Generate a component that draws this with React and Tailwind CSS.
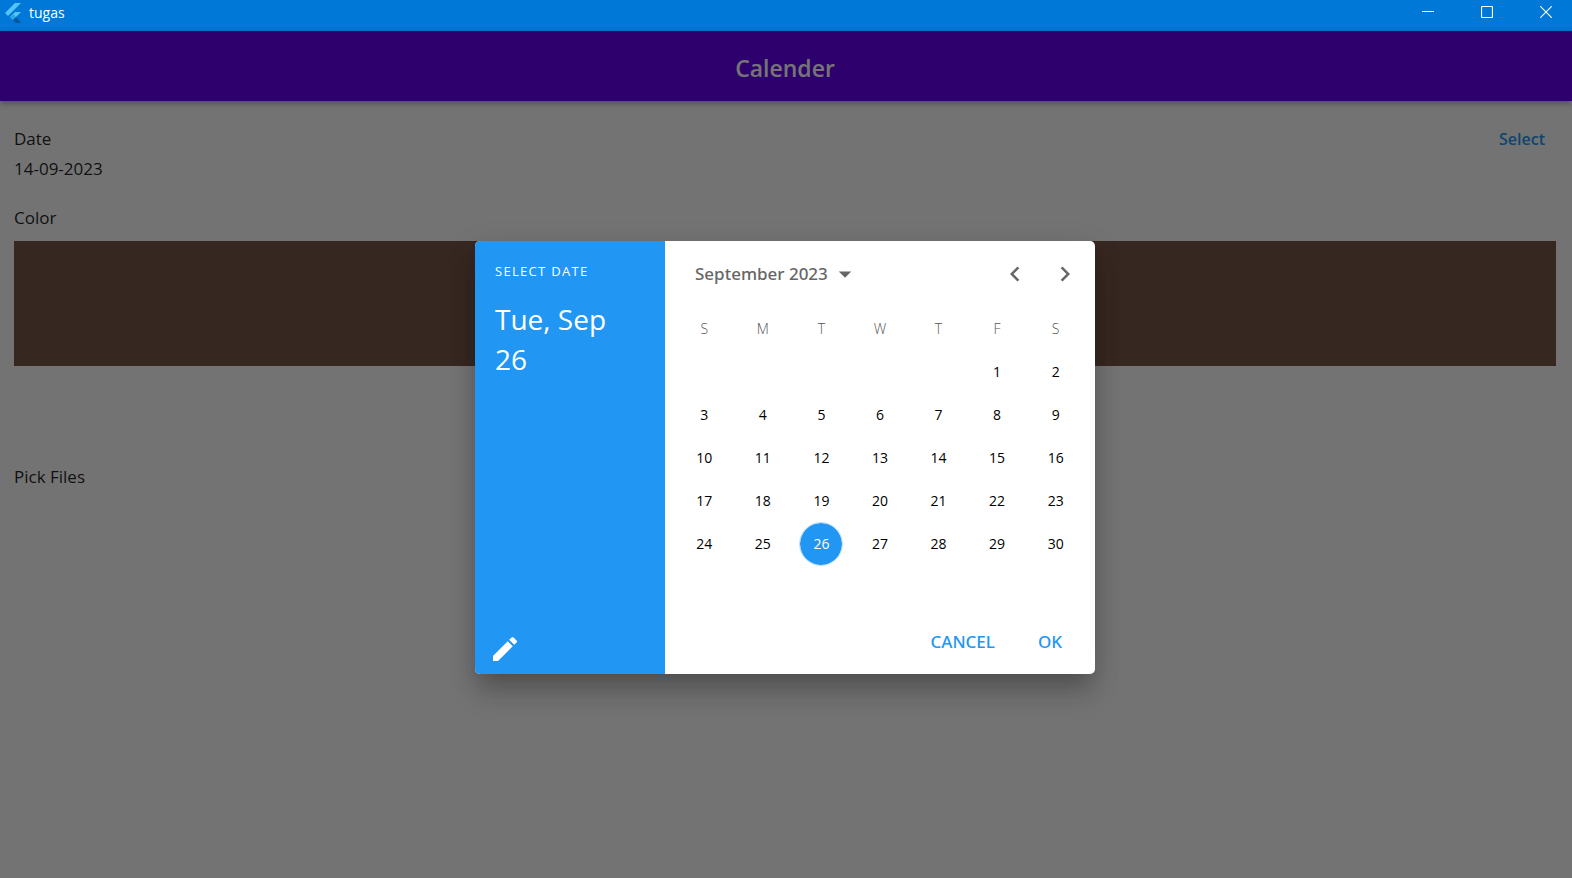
import React from "react";
import { MdArrowDropDown, MdChevronLeft, MdChevronRight, MdEdit } from "react-icons/md";

const WEEKDAYS = ["S", "M", "T", "W", "T", "F", "S"];
const WEEKS = [
  [null, null, null, null, null, 1, 2],
  [3, 4, 5, 6, 7, 8, 9],
  [10, 11, 12, 13, 14, 15, 16],
  [17, 18, 19, 20, 21, 22, 23],
  [24, 25, 26, 27, 28, 29, 30],
];
const SELECTED = 26;

function FlutterLogo() {
  return (
    <svg viewBox="0 0 16 20" className="h-5 w-4" aria-hidden="true">
      <path d="M0 10 L10 0 H16 L3 13 Z" fill="#54c5f8" />
      <path d="M10 9 H16 L8 17 L5 14 Z" fill="#54c5f8" />
      <path d="M5 14 L8 11 L11 14 L8 17 Z" fill="#29a5e8" />
      <path d="M8 17 L11 14 L16 20 H11 Z" fill="#01579b" />
    </svg>
  );
}

function TitleBar() {
  return (
    <header className="flex h-[31px] shrink-0 justify-between bg-[#0078d7] text-white">
      <div className="flex h-6 items-center gap-2 pt-px pl-[5px]">
        <FlutterLogo />
        <span className="text-sm">tugas</span>
      </div>
      <div className="flex h-6 items-center gap-[47px] pr-5">
        <button type="button" aria-label="Minimize" className="flex size-3 items-center">
          <svg viewBox="0 0 12 12" className="size-3" stroke="currentColor" shapeRendering="crispEdges">
            <path d="M0 5.5 H12" />
          </svg>
        </button>
        <button type="button" aria-label="Maximize" className="size-3">
          <svg viewBox="0 0 12 12" className="size-3" fill="none" stroke="currentColor">
            <rect x="0.5" y="0.5" width="11" height="11" rx="1" strokeWidth="1.2" />
          </svg>
        </button>
        <button type="button" aria-label="Close" className="size-3">
          <svg viewBox="0 0 12 12" className="size-3" stroke="currentColor" strokeWidth="1.1">
            <path d="M0.3 0.3 L11.7 11.7 M11.7 0.3 L0.3 11.7" />
          </svg>
        </button>
      </div>
    </header>
  );
}

function DateDialog() {
  return (
    <section
      role="dialog"
      aria-label="Select date"
      className="flex w-[620px] overflow-hidden rounded-[5px] bg-white shadow-[0_14px_19px_-9px_rgba(0,0,0,0.16),0_24px_28px_-2px_rgba(0,0,0,0.14),0_6px_28px_2px_rgba(0,0,0,0.1)]"
    >
      <div className="flex w-[190px] shrink-0 flex-col justify-between bg-[#2196f3] text-white">
        <div className="px-5 pt-5">
          <p className="text-[13px] leading-5 tracking-widest">SELECT DATE</p>
          <p className="pt-[18px] text-[28px] leading-10">Tue, Sep 26</p>
        </div>
        <button type="button" aria-label="Switch to input" className="mb-[9px] ml-3.5 size-8">
          <MdEdit className="size-8" />
        </button>
      </div>
      <div className="flex flex-1 flex-col">
        <div className="flex h-[66px] items-center justify-between pr-[15px] pl-[30px] text-[#666666]">
          <button
            type="button"
            className="flex items-center gap-0.5 font-['Noto_Sans','Open_Sans',sans-serif] text-[17px] font-medium"
          >
            September 2023
            <MdArrowDropDown className="size-[30px]" />
          </button>
          <div className="flex gap-5">
            <button type="button" aria-label="Previous month">
              <MdChevronLeft className="size-[30px]" />
            </button>
            <button type="button" aria-label="Next month">
              <MdChevronRight className="size-[30px]" />
            </button>
          </div>
        </div>
        <div className="px-2.5">
          <table className="w-full table-fixed border-collapse text-center text-sm">
            <thead>
              <tr className="h-[43px] text-[#555555]">
                {WEEKDAYS.map((day, i) => (
                  <th key={i} scope="col" className="p-0 font-light">{day}</th>
                ))}
              </tr>
            </thead>
            <tbody>
              {WEEKS.map((week, w) => (
                <tr key={w} className="h-[43px] text-black">
                  {week.map((day, i) => (
                    <td key={i} className="p-0">
                      {day && (
                        <button
                          type="button"
                          className={
                            day === SELECTED
                              ? "size-[42px] rounded-full bg-[#2196f3] text-white outline-1 outline-[#bfe0fb]"
                              : "size-[42px] rounded-full"
                          }
                        >
                          {day}
                        </button>
                      )}
                    </td>
                  ))}
                </tr>
              ))}
            </tbody>
          </table>
        </div>
        <div className="mt-[44px] flex h-[65px] items-center justify-end gap-[43px] pr-[33px] font-['Noto_Sans','Open_Sans',sans-serif] text-[17px] font-medium text-[#2196f3]">
          <button type="button">CANCEL</button>
          <button type="button">OK</button>
        </div>
      </div>
    </section>
  );
}

export default function App() {
  return (
    <div className="flex min-h-screen flex-col font-['Open_Sans','Noto_Sans',sans-serif]">
      <TitleBar />
      <div className="relative flex flex-1 flex-col bg-[#fafafa]">
        <div className="flex h-[70px] items-center justify-center bg-[#6200ee] pt-1 pr-0.5 shadow-[0_2px_6px_rgba(0,0,0,0.35)]">
          <h1 className="text-[23px] font-semibold text-white">Calender</h1>
        </div>
        <main className="flex flex-col px-3.5 pt-[23px] pr-4 text-[17px] leading-[30px] text-black/87">
          <div className="flex justify-between">
            <span>Date</span>
            <button type="button" className="pr-[11px] text-base font-semibold text-[#2196f3]">Select</button>
          </div>
          <span>14-09-2023</span>
          <span className="pt-[19px]">Color</span>
          <div className="mt-2 h-[125px] bg-[#795548]" />
          <span className="pt-24">Pick Files</span>
        </main>
        <div className="absolute inset-0 flex items-center justify-center bg-black/54 pt-1.5 pr-0.5">
          <DateDialog />
        </div>
      </div>
    </div>
  );
}
